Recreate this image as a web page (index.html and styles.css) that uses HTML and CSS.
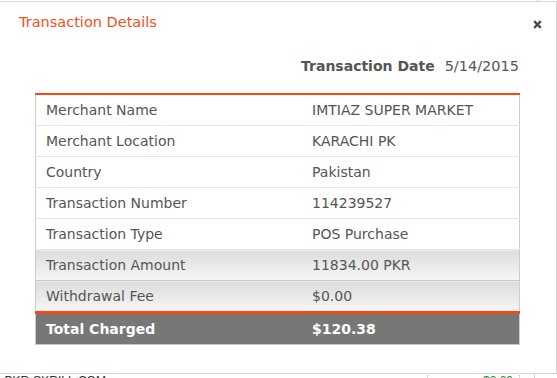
FILE: index.html
```html
<!DOCTYPE html>
<html>
<head>
<meta charset="utf-8">
<link rel="stylesheet" href="styles.css">
</head>
<body>
<div class="bg">
  <div class="bg-top"><span class="bg-rule"></span></div>
  <div class="bg-row">
    <span class="bg-merchant">• PKR-SKRILL.COM</span>
    <span class="bg-cell bg-sep1"></span>
    <span class="bg-amount">$2.00</span>
    <span class="bg-cell bg-sep2"></span>
    <span class="bg-cell bg-sep3"></span>
  </div>
</div>

<div class="modal">
  <div class="modal-header">
    <h1 class="modal-title">Transaction Details</h1>
    <svg class="close" width="9" height="9" viewBox="0 0 9 9" aria-label="close"><path d="M1.2 1.2 L7.8 7.8 M7.8 1.2 L1.2 7.8" stroke="#4d4d4d" stroke-width="2.4" stroke-linecap="butt"/></svg>
  </div>
  <div class="date-line"><span class="date-label">Transaction Date</span><span class="date-value">5/14/2015</span></div>
  <table class="details">
    <tr><td class="lbl">Merchant Name</td><td>IMTIAZ SUPER MARKET</td></tr>
    <tr><td class="lbl">Merchant Location</td><td>KARACHI PK</td></tr>
    <tr><td class="lbl">Country</td><td>Pakistan</td></tr>
    <tr><td class="lbl">Transaction Number</td><td>114239527</td></tr>
    <tr><td class="lbl">Transaction Type</td><td>POS Purchase</td></tr>
    <tr class="shaded"><td class="lbl">Transaction Amount</td><td>11834.00 PKR</td></tr>
    <tr class="shaded"><td class="lbl">Withdrawal Fee</td><td>$0.00</td></tr>
    <tr class="total"><td class="lbl">Total Charged</td><td>$120.38</td></tr>
  </table>
</div>
</body>
</html>
```
FILE: styles.css
```css
html, body {
  margin: 0;
  padding: 0;
  background: #fff;
  overflow: hidden;
}
body {
  width: 557px;
  height: 378px;
  position: relative;
  font-family: "DejaVu Sans", Verdana, sans-serif;
}

/* background page peeking out below the dialog */
.bg {
  position: relative;
  height: 378px;
}
.bg-top {
  height: 372px;
  position: relative;
}
.bg-rule {
  display: block;
  margin-left: 537px;
  width: 1px;
  height: 2px;
  background: #ccc;
}
.bg-row {
  display: flex;
  align-items: flex-start;
  height: 20px;
  font-family: "Liberation Sans", Arial, sans-serif;
  font-size: 12px;
  line-height: 14px;
  padding-top: 2px;
}
.bg-merchant {
  width: 430px;
  color: #333;
  margin-left: -3px;
}
.bg-cell {
  display: block;
  width: 0;
  height: 20px;
  margin-top: -2px;
}
.bg-sep1 { border-left: 1px dotted #bbb; }
.bg-amount {
  width: 91px;
  padding-left: 55px;
  box-sizing: border-box;
  color: #2e8b2e;
}
.bg-sep2 { border-left: 1px dotted #bbb; width: 14px; }
.bg-sep3 { border-left: 1px solid #ccc; }

/* dialog */
.modal {
  position: absolute;
  top: 1px;
  left: -1px;
  width: 558px;
  height: 373px;
  box-sizing: border-box;
  background: #fff;
  border: 1px solid #d6d6d6;
  color: #555;
}
.modal-header {
  display: flex;
  justify-content: space-between;
  align-items: flex-start;
  padding: 10px 14px 0 19px;
  height: 34px;
}
.modal-title {
  margin: 0;
  font-size: 14.5px;
  font-weight: normal;
  line-height: 20px;
  color: #f24e1e;
}
.close {
  margin-top: 8px;
}
.date-line {
  display: flex;
  justify-content: flex-end;
  gap: 10px;
  padding-right: 37px;
  font-size: 14.5px;
  line-height: 20px;
  height: 47px;
  padding-top: 10px;
  box-sizing: border-box;
  color: #555;
}
.date-label { font-weight: bold; font-size: 14px; }

.details {
  margin-left: 35px;
  width: 485px;
  border-collapse: collapse;
  border-top: 2px solid #f4490f;
  font-size: 14px;
  color: #555;
}
.details td {
  height: 30px;
  padding: 0 10px;
  border-bottom: 1px solid #e6e6e6;
  line-height: 16px;
}
.details td.lbl {
  width: 246px;
  border-left: 1px solid #ccc;
}
.details td:last-child {
  border-right: 1px solid #ccc;
}
.details tr.shaded td {
  background: linear-gradient(#dcdcdc, #f6f6f6);
  border-top: 1px solid #c9c9c9;
  border-bottom: 1px solid #c9c9c9;
}
.details tr.total td {
  background: #777;
  color: #fff;
  font-weight: bold;
  border-top: 3px solid #f4490f;
  border-bottom: 1px solid #c4c4c4;
}
```
